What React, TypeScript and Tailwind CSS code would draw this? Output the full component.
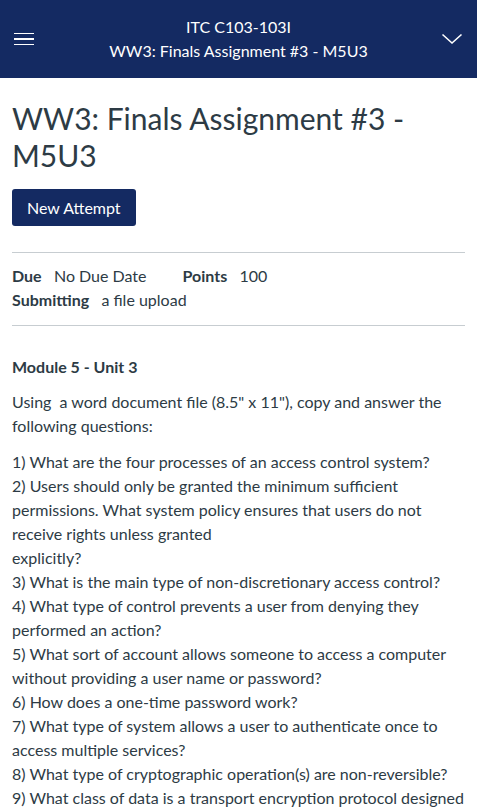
import React from "react";

const questions = [
  "1) What are the four processes of an access control system?",
  "2) Users should only be granted the minimum sufficient permissions. What system policy ensures that users do not receive rights unless granted",
  "explicitly?",
  "3) What is the main type of non-discretionary access control?",
  "4) What type of control prevents a user from denying they performed an action?",
  "5) What sort of account allows someone to access a computer without providing a user name or password?",
  "6) How does a one-time password work?",
  "7) What type of system allows a user to authenticate once to access multiple services?",
  "8) What type of cryptographic operation(s) are non-reversible?",
  "9) What class of data is a transport encryption protocol designed to protect?",
];

export default function App() {
  return (
    <div className="min-h-screen bg-white text-[#2d3b45]" style={{ fontFamily: "Lato, 'Noto Sans', sans-serif" }}>
      <header className="h-[78px] bg-[#142a62] text-white flex items-center px-[14px]">
        <button className="w-[22px] flex flex-col gap-[4px] shrink-0">
          <span className="block h-[1.5px] w-[20px] bg-white" />
          <span className="block h-[1.5px] w-[20px] bg-white" />
          <span className="block h-[1.5px] w-[20px] bg-white" />
        </button>
        <div className="flex-1 text-center text-[16px] leading-[24px]">
          <div>ITC C103-103I</div>
          <div>WW3: Finals Assignment #3 - M5U3</div>
        </div>
        <svg width="22" height="12" viewBox="0 0 22 12" className="shrink-0">
          <path d="M1.5 1.5 L11 10 L20.5 1.5" fill="none" stroke="white" strokeWidth="1.6" />
        </svg>
      </header>
      <main className="px-3">
        <h1 className="mt-[22px] text-[30px] leading-[37px] font-normal">WW3: Finals Assignment #3 - M5U3</h1>
        <button className="mt-[15px] h-[37px] px-[15px] rounded-[3px] bg-[#142a62] text-white text-[16px]">New Attempt</button>
        <div className="mt-[26px] border-t border-[#c7cdd1] pt-[11px] pb-[13px] text-[16px] leading-[24px]">
          <div className="flex">
            <span><b className="font-bold">Due</b>&nbsp;&nbsp; No Due Date</span>
            <span className="ml-[36px]"><b className="font-bold">Points</b>&nbsp;&nbsp; 100</span>
          </div>
          <div><b className="font-bold">Submitting</b>&nbsp;&nbsp; a file upload</div>
        </div>
        <div className="border-t border-[#c7cdd1] pt-[29px] text-[16px] leading-[24px]">
          <p className="font-bold">Module 5 - Unit 3</p>
          <p className="mt-[11px]">Using&nbsp; a word document file (8.5" x 11"), copy and answer the following questions:</p>
          <p className="mt-[12px]">
            {questions.map((q, i) => (
              <React.Fragment key={i}>
                {q}
                <br />
              </React.Fragment>
            ))}
          </p>
        </div>
      </main>
    </div>
  );
}
